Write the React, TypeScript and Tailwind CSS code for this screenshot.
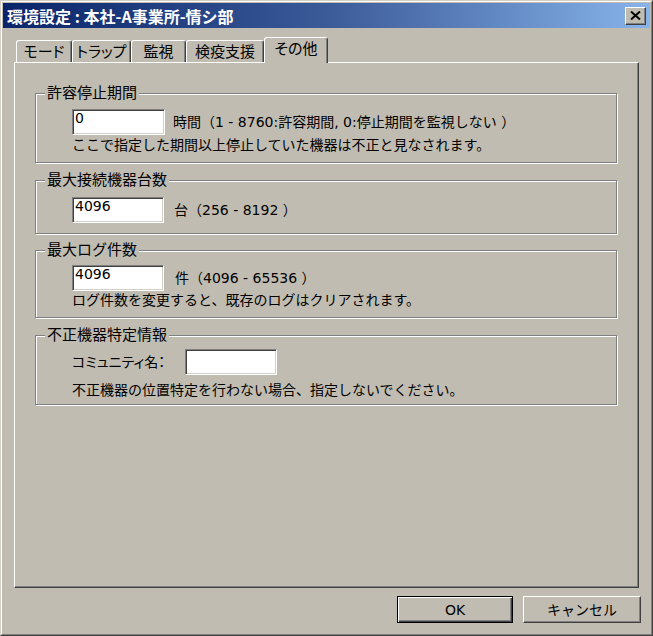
import React from 'react';

interface TabProps {
  label: string;
  w: string;
  selected?: boolean;
}

const Tab: React.FC<TabProps> = ({ label, w, selected }) => {
  if (selected) {
    return (
      <div
        className={`relative z-10 -mb-px flex h-[26px] ${w} items-start justify-center rounded-t-[3px] border-t border-r border-l border-t-white border-r-[#404040] border-l-white bg-[#c0bcb1] pt-[2px] text-[15px] leading-[18px] shadow-[inset_-1px_0_0_#808080] [font-feature-settings:'palt']`}
      >
        {label}
      </div>
    );
  }
  return (
    <div
      className={`flex h-[22px] ${w} items-start justify-center rounded-t-[3px] border-t border-r border-l border-t-white border-r-[#404040] border-l-white pt-[2px] text-[15px] leading-[18px] shadow-[inset_-1px_0_0_#808080] [font-feature-settings:'palt']`}
    >
      {label}
    </div>
  );
};

interface GroupProps {
  label: string;
  className: string;
  children: React.ReactNode;
}

const Group: React.FC<GroupProps> = ({ label, className, children }) => (
  <div
    className={`relative w-[582px] border border-[#808080] pl-[36px] shadow-[inset_1px_1px_0_#fff,1px_1px_0_#fff] ${className}`}
  >
    <span className="absolute top-[-10px] left-[9px] bg-[#c0bcb1] px-[2px] text-[15px] leading-[18px]">
      {label}
    </span>
    {children}
  </div>
);

const Field: React.FC<{ value?: string; w: string }> = ({ value, w }) => (
  <div
    className={`h-[26px] ${w} shrink-0 border border-t-[#808080] border-r-white border-b-white border-l-[#808080] bg-white pl-[2px] text-[14px] leading-[16px] shadow-[inset_1px_1px_0_#404040,inset_-1px_-1px_0_#d4d0c8]`}
  >
    {value}
  </div>
);

export default function App() {
  return (
    <div className="h-[636px] w-[653px] border border-t-[#d4d0c8] border-r-[#404040] border-b-[#404040] border-l-[#d4d0c8] bg-[#c0bcb1] font-['DejaVu_Sans','Noto_Sans_CJK_JP',sans-serif] text-black">
      <div className="flex h-full flex-col border border-t-white border-r-[#808080] border-b-[#808080] border-l-white p-px">
        {/* title bar */}
        <div className="flex h-[25px] shrink-0 items-center justify-between bg-linear-to-r from-[#0a246a] via-[#3b5a98] to-[#88b4ea] pl-[4px] pr-[4px]">
          <span className="font-['Noto_Sans_CJK_JP',sans-serif] text-[16px] leading-[20px] font-bold text-white">
            環境設定 : 本社-A事業所-情シ部
          </span>
          <div className="flex h-[18px] w-[21px] items-center justify-center border border-t-white border-r-[#404040] border-b-[#404040] border-l-white bg-[#c0bcb1] shadow-[inset_-1px_-1px_0_#808080]">
            <svg width="11" height="9" viewBox="0 0 11 9">
              <path d="M1 0.5 L10 8.5 M10 0.5 L1 8.5" stroke="#000" strokeWidth="2" fill="none" />
            </svg>
          </div>
        </div>

        <div className="flex flex-col pt-[9px] pl-[11px]">
          {/* tabs */}
          <div className="flex h-[25px] items-end pl-[2px]">
            <Tab label="モード" w="w-[56px]" />
            <Tab label="トラップ" w="w-[59px]" />
            <Tab label="監視" w="w-[55px]" />
            <Tab label="検疫支援" w="w-[78px]" />
            <Tab label="その他" w="w-[64px]" selected />
          </div>

          {/* panel */}
          <div className="flex h-[526px] w-[625px] flex-col border border-t-white border-r-[#404040] border-b-[#404040] border-l-white pt-[30px] pl-[20px] text-[14px] leading-[18px] shadow-[inset_-1px_-1px_0_#808080]">
            <Group label="許容停止期間" className="h-[70px] pt-[15px]">
              <div className="flex items-center">
                <Field value="0" w="w-[93px]" />
                <span className="ml-[8px]">時間（1 - 8760:許容期間, 0:停止期間を監視しない ）</span>
              </div>
              <p className="mt-[1px]">ここで指定した期間以上停止していた機器は不正と見なされます。</p>
            </Group>

            <Group label="最大接続機器台数" className="mt-[17px] h-[54px] pt-[16px]">
              <div className="flex items-center">
                <Field value="4096" w="w-[92px]" />
                <span className="ml-[10px]">台（256 - 8192 ）</span>
              </div>
            </Group>

            <Group label="最大ログ件数" className="mt-[16px] h-[68px] pt-[14px]">
              <div className="flex items-center">
                <Field value="4096" w="w-[92px]" />
                <span className="ml-[11px]">件（4096 - 65536 ）</span>
              </div>
              <p className="mt-0">ログ件数を変更すると、既存のログはクリアされます。</p>
            </Group>

            <Group label="不正機器特定情報" className="mt-[17px] h-[70px] pt-[13px]">
              <div className="flex items-center">
                <span className="w-[113px] [font-feature-settings:'palt']">コミュニティ名：</span>
                <Field w="w-[92px]" />
              </div>
              <p className="mt-[6px]">不正機器の位置特定を行わない場合、指定しないでください。</p>
            </Group>
          </div>

          {/* buttons */}
          <div className="mt-[8px] -mr-[2px] flex justify-end gap-[10px] pr-[11px]">
            <button className="flex h-[27px] w-[116px] items-center justify-center border border-black text-[14px] leading-[18px] shadow-[inset_1px_1px_0_#fff,inset_-1px_-1px_0_#404040,inset_-2px_-2px_0_#808080]">
              OK
            </button>
            <button className="flex h-[27px] w-[118px] items-center justify-center border border-t-white border-r-[#404040] border-b-[#404040] border-l-white text-[14px] leading-[18px] shadow-[inset_-1px_-1px_0_#808080]">
              キャンセル
            </button>
          </div>
        </div>
      </div>
    </div>
  );
}
